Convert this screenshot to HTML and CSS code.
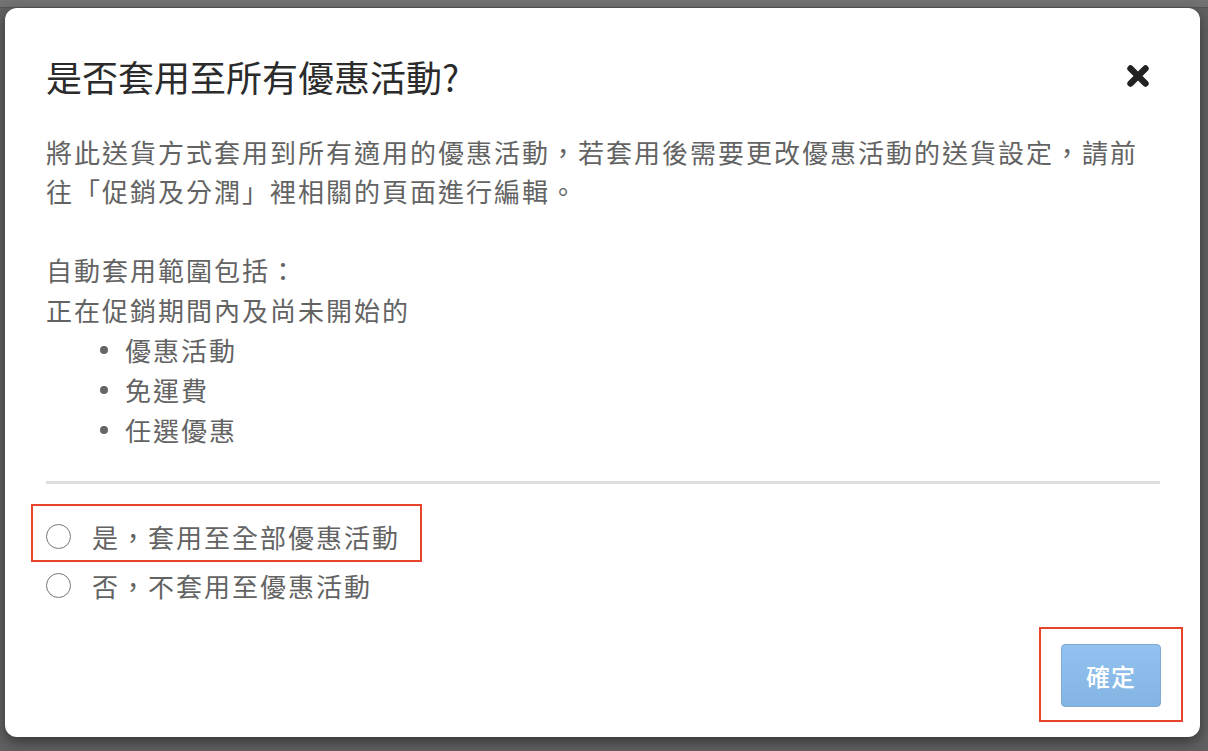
FILE: index.html
```html
<!DOCTYPE html>
<html lang="zh-Hant">
<head>
    <meta charset="UTF-8">
    <meta name="viewport" content="width=device-width, initial-scale=1.0">
    <title>套用至優惠活動</title>
    <link rel="stylesheet" href="styles.css">
</head>
<body>
    <div class="modal">
        <div class="modal-header">
            <h1 class="modal-title">是否套用至所有優惠活動?</h1>
            <button class="close" aria-label="關閉">
                <svg width="24" height="24" viewBox="0 0 24 24">
                    <path d="M4.5 4.5 L19.5 19.5 M19.5 4.5 L4.5 19.5" stroke="#222" stroke-width="6.4" stroke-linecap="round" fill="none"/>
                </svg>
            </button>
        </div>
        <div class="modal-body">
            <p class="intro">將此送貨方式套用到所有適用的優惠活動，若套用後需要更改優惠活動的送貨設定，請前往「促銷及分潤」裡相關的頁面進行編輯。</p>
            <p class="scope">自動套用範圍包括：<br>正在促銷期間內及尚未開始的</p>
            <ul class="scope-list">
                <li>優惠活動</li>
                <li>免運費</li>
                <li>任選優惠</li>
            </ul>
            <hr class="divider">
            <label class="option marked">
                <input type="radio" name="apply" value="yes">
                <span class="radio"></span>
                <span>是，套用至全部優惠活動</span>
            </label>
            <label class="option">
                <input type="radio" name="apply" value="no">
                <span class="radio"></span>
                <span>否，不套用至優惠活動</span>
            </label>
        </div>
        <div class="modal-footer">
            <button class="confirm marked" disabled>確定</button>
        </div>
    </div>
</body>
</html>
```

FILE: styles.css
```css
body{
    margin: 0;
    height: 751px;
    overflow: hidden;
    background: linear-gradient(#727272 0px, #727272 7px, #555 7px, #555 8px, #616161 8px);
    font-family: "Noto Sans CJK TC", "Noto Sans", sans-serif;
}

.modal{
    margin: 8px 0 0 5px;
    width: 1195px;
    height: 729px;
    box-sizing: border-box;
    padding: 0 40px 0 41px;
    background-color: white;
    border-radius: 12px;
    box-shadow: 0 5px 14px rgba(0, 0, 0, 0.45);
    display: flex;
    flex-direction: column;
}

.modal-header{
    display: flex;
    justify-content: space-between;
    align-items: center;
    padding-top: 44px;
}

.modal-title{
    margin: 0;
    font-size: 36px;
    line-height: 48px;
    font-weight: normal;
    color: #2b2b2b;
}

.close{
    border: none;
    background: none;
    padding: 0;
    margin-right: 10px;
    width: 24px;
    height: 24px;
    display: flex;
}

.modal-body{
    margin-top: 32px;
    font-size: 26px;
    letter-spacing: 2px;
    line-height: 40px;
    color: #636363;
}

.modal-body p{
    margin: 0;
}

.intro{
    line-height: 39px;
    margin-bottom: 40px !important;
}

.scope-list{
    list-style: none;
    margin: 0;
    padding: 0;
}

.scope-list li{
    display: flex;
    align-items: center;
    padding-left: 54px;
}

.scope-list li::before{
    content: "";
    width: 8px;
    height: 8px;
    border-radius: 50%;
    background-color: #666;
    margin-right: 17px;
}

.divider{
    margin: 31px 0 28px 0;
    border: none;
    height: 3px;
    background-color: #dedede;
}

.option{
    position: relative;
    display: flex;
    align-items: center;
    height: 49px;
    width: fit-content;
}

.option input{
    display: none;
}

.radio{
    width: 25px;
    height: 25px;
    box-sizing: border-box;
    border: 1.6px solid #777;
    border-radius: 50%;
    margin-right: 21px;
}

.marked::after{
    content: "";
    position: absolute;
    border: 2px solid #e6452c;
    pointer-events: none;
}

.option.marked::after{
    left: -15px;
    top: -8px;
    width: 387px;
    height: 54px;
}

.modal-footer{
    margin-top: auto;
    padding-bottom: 30px;
    display: flex;
    justify-content: flex-end;
}

.confirm{
    position: relative;
    width: 100px;
    height: 63px;
    margin-right: -1px;
    border: 1px solid #80aad6;
    border-radius: 4px;
    background: linear-gradient(#92c3f0, #84b4e1);
    color: white;
    font-family: "Noto Sans CJK TC", sans-serif;
    font-size: 24px;
    font-weight: 500;
    letter-spacing: 1px;
}

.confirm.marked::after{
    left: -23px;
    top: -18px;
    width: 140px;
    height: 91px;
}
```
